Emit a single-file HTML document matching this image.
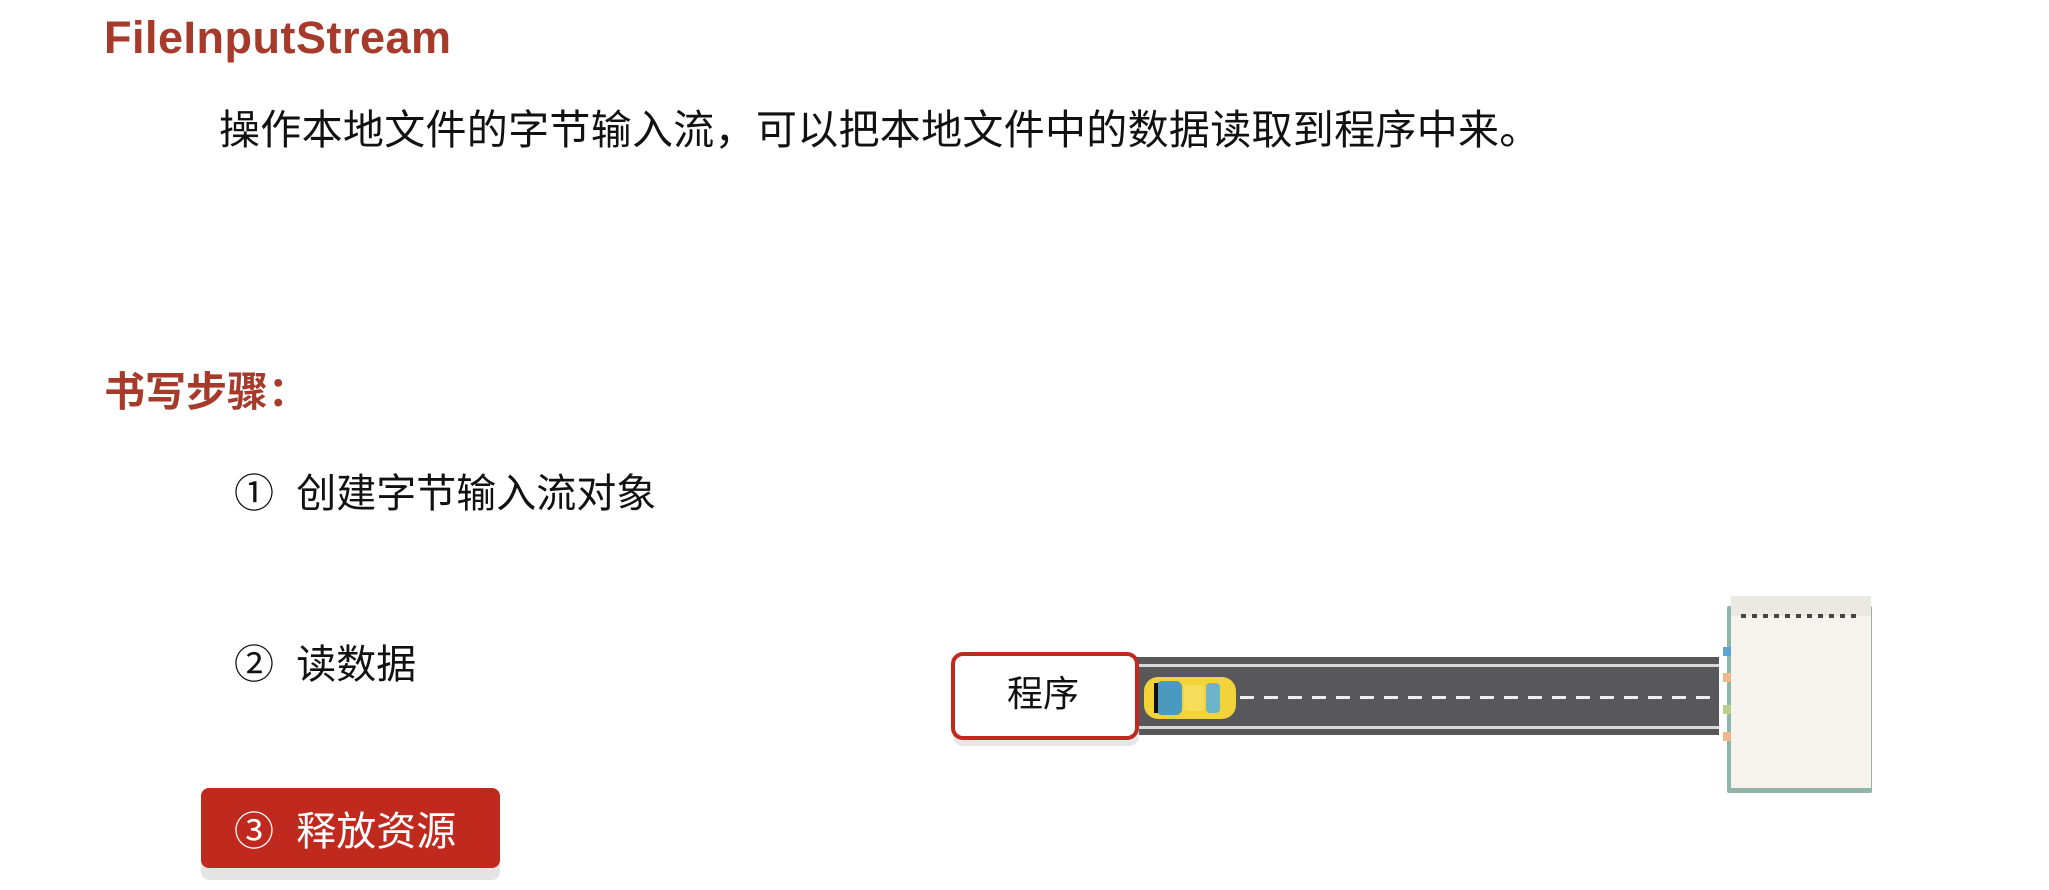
<!DOCTYPE html>
<html><head><meta charset="utf-8"><style>
body{margin:0;width:2049px;height:890px;background:#fff;position:relative;overflow:hidden;font-family:"Liberation Sans","Noto Sans CJK SC",sans-serif}
.a{position:absolute;white-space:nowrap;line-height:1}
.red{color:#a63a2b;font-weight:bold}
</style></head><body>
<div class="a red" style="left:104px;top:15px;font-size:45px;letter-spacing:0.5px">FileInputStream</div>
<div class="a" style="left:219px;top:110px;font-size:41px;color:#111;letter-spacing:0.3px">操作本地文件的字节输入流，可以把本地文件中的数据读取到程序中来。</div>
<div class="a red" style="left:104px;top:372px;font-size:41px">书写步骤：</div>
<div class="a" style="left:234px;top:474px;font-size:40px;color:#111">①&nbsp; 创建字节输入流对象</div>
<div class="a" style="left:234px;top:645px;font-size:40px;color:#111">②&nbsp; 读数据</div>
<div class="a" style="left:201px;top:796px;width:299px;height:84px;background:#e4e4e4;border-radius:8px"></div>
<div class="a" style="left:201px;top:788px;width:299px;height:80px;background:#c0291e;border-radius:8px"></div>
<div class="a" style="left:234px;top:812px;font-size:40px;color:#fff">③&nbsp; 释放资源</div>

<div class="a" style="left:1137px;top:657px;width:582px;height:78px;background:#58585a"></div>
<div class="a" style="left:1137px;top:664px;width:582px;height:3px;background:#d8d8d8"></div>
<div class="a" style="left:1137px;top:726px;width:582px;height:3px;background:#d8d8d8"></div>
<div class="a" style="left:1240px;top:696px;width:479px;height:3px;background:repeating-linear-gradient(90deg,#eee 0 14px,transparent 14px 24px)"></div>
<div class="a" style="left:953px;top:664px;width:186px;height:82px;background:#e6e6e6;border-radius:10px"></div>
<div class="a" style="left:951px;top:652px;width:180px;height:80px;border:4px solid #c0291e;border-radius:12px;background:#fff"></div>
<div class="a" style="left:1007px;top:676px;font-size:36px;color:#111">程序</div>
<svg class="a" style="left:1142px;top:675px" width="96" height="46" viewBox="0 0 96 46">
<rect x="2" y="2" width="92" height="42" rx="14" fill="#f2d43a"/>
<rect x="14" y="6" width="26" height="34" rx="6" fill="#4a9ac0"/>
<rect x="42" y="10" width="20" height="26" rx="4" fill="#f5dc5a"/>
<rect x="64" y="8" width="14" height="30" rx="4" fill="#6ab4cc"/>
<rect x="12" y="8" width="4" height="30" fill="#111"/>
</svg>
<div class="a" style="left:1727px;top:606px;width:145px;height:187px;background:#8fb5a8;border-radius:2px"></div>
<div class="a" style="left:1731px;top:596px;width:140px;height:192px;background:#f6f3ee"></div>
<div class="a" style="left:1731px;top:596px;width:140px;height:20px;background:#ebe9e2"></div>
<div class="a" style="left:1741px;top:614px;width:120px;height:4px;background:repeating-linear-gradient(90deg,#444 0 5px,transparent 5px 11px)"></div>
<div class="a" style="left:1723px;top:647px;width:8px;height:9px;background:#5ca6d6"></div>
<div class="a" style="left:1723px;top:673px;width:8px;height:9px;background:#f0b88a"></div>
<div class="a" style="left:1723px;top:705px;width:8px;height:9px;background:#b8d08a"></div>
<div class="a" style="left:1723px;top:732px;width:8px;height:9px;background:#f0b88a"></div>
</body></html>
